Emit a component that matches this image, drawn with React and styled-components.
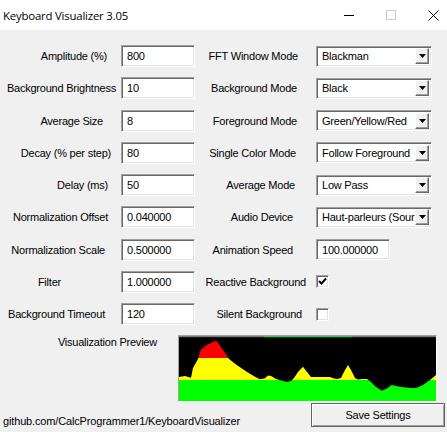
import styled, { createGlobalStyle } from "styled-components";

const GlobalStyle = createGlobalStyle`
  body {
    margin: 0;
    background: #f0f0f0;
  }
`;

const Window = styled.div`
  width: 447px;
  height: 432px;
  display: flex;
  flex-direction: column;
  overflow: hidden;
  background: #f0f0f0;
  font-family: "Liberation Sans", Arial, sans-serif;
  font-size: 11px;
  letter-spacing: -0.22px;
  color: #000;
`;

const TitleBar = styled.div`
  height: 30px;
  flex: none;
  display: flex;
  align-items: center;
  background: #fff;
  padding-left: 3px;
`;

const Title = styled.div`
  flex: 1;
  font-family: "Open Sans", "Noto Sans", sans-serif;
  font-size: 11.4px;
  letter-spacing: -0.2px;
`;

const Controls = styled.div`
  display: flex;
  gap: 14px;
  height: 100%;
`;

const CtrlButton = styled.div`
  width: 28px;
  display: flex;
  align-items: center;
  justify-content: center;
`;

const Body = styled.div`
  flex: 1;
  display: flex;
  flex-direction: column;
  padding: 10px 2px 0 0;
`;

const Form = styled.div`
  display: grid;
  grid-template-columns: 121px 74px 121px 116px;
  grid-auto-rows: 32.25px;
  align-items: center;
`;

const Label = styled.div`
  text-align: right;
  white-space: nowrap;
  padding-right: ${(p) => p.$pr}px;
`;

const Sunken = styled.div`
  box-sizing: border-box;
  background: #fff;
  border: 1px solid;
  border-color: #a0a0a0 #fff #fff #a0a0a0;
  box-shadow: inset 1px 1px 0 #696969, inset -1px -1px 0 #e3e3e3;
`;

const Edit = styled(Sunken)`
  width: 74px;
  height: ${(p) => p.$h || 22}px;
  display: flex;
  align-items: center;
  padding-left: 5px;
  white-space: nowrap;
`;

const Combo = styled(Sunken)`
  width: 116px;
  height: 21px;
  display: flex;
  align-items: center;
  padding: 2px;
`;

const ComboText = styled.div`
  flex: 1;
  padding-left: 3px;
  white-space: nowrap;
`;

const ArrowButton = styled.div`
  box-sizing: border-box;
  width: 14px;
  height: 16px;
  flex: none;
  display: flex;
  align-items: center;
  justify-content: center;
  background: #f0f0f0;
  border: 1px solid;
  border-color: #fff #696969 #696969 #fff;
  box-shadow: inset -1px -1px 0 #a0a0a0;
`;

const Check = styled(Sunken)`
  width: 13px;
  height: 13px;
  justify-self: start;
  display: flex;
  align-items: center;
  justify-content: center;
`;

const PreviewRow = styled.div`
  display: flex;
  margin-top: 5px;
`;

const PreviewLabel = styled.div`
  width: 178px;
  box-sizing: border-box;
  text-align: right;
  padding: 1px 21px 0 0;
`;

const PreviewBox = styled.div`
  width: 259px;
  height: 67px;
  box-sizing: border-box;
  border: 1px solid;
  border-color: #a0a0a0 #fff #fff #a0a0a0;
  overflow: hidden;

  svg {
    display: block;
  }
`;

const Footer = styled.div`
  flex: 1;
  display: flex;
  justify-content: space-between;
  align-items: flex-start;
  padding-left: 3px;
`;

const Link = styled.div`
  align-self: flex-end;
  padding-bottom: 5px;
  letter-spacing: -0.15px;
`;

const Button = styled.div`
  box-sizing: border-box;
  margin-top: 1px;
  width: 134px;
  height: 24px;
  display: flex;
  align-items: center;
  justify-content: center;
  background: #f0f0f0;
  border: 1px solid #646464;
  box-shadow: inset 1px 1px 0 #fff, inset -1px -1px 0 #a0a0a0;
`;

const leftRows = [
  ["Amplitude (%)", 14, "800"],
  ["Background Brightness", 5, "10"],
  ["Average Size", 18, "8"],
  ["Decay (% per step)", 10, "80"],
  ["Delay (ms)", 13, "50"],
  ["Normalization Offset", 13, "0.040000"],
  ["Normalization Scale", 16, "0.500000"],
  ["Filter", 60, "1.000000"],
  ["Background Timeout", 16, "120"],
];

const rightRows = [
  ["FFT Window Mode", 18, "combo", "Blackman"],
  ["Background Mode", 19, "combo", "Black"],
  ["Foreground Mode", 19, "combo", "Green/Yellow/Red"],
  ["Single Color Mode", 20, "combo", "Follow Foreground"],
  ["Average Mode", 21, "combo", "Low Pass"],
  ["Audio Device", 23, "combo", "Haut-parleurs (Sour"],
  ["Animation Speed", 23, "edit", "100.000000"],
  ["Reactive Background", 10, "check", true],
  ["Silent Background", 14, "check", false],
];

// spectrum outline, in window pixels
const curve = [
  [179, 377], [185, 376], [191, 377.7], [193, 368], [198, 359], [200.7, 350],
  [205, 346], [210.7, 343], [215, 341], [217, 341.5], [223, 350], [229, 359],
  [236.7, 365], [246.7, 371.7], [255, 376.7], [260, 379.3], [265, 378.3],
  [268, 375.5], [271, 376], [276, 379], [283, 381], [287, 382], [291, 381],
  [294, 378], [298, 372], [303, 366.7], [307, 372], [311, 377], [320, 377],
  [330, 377], [334, 378.5], [337, 379], [341, 378], [345, 370], [348, 365],
  [351, 370], [355, 378], [358, 379.5], [362, 379], [367, 379], [371, 382],
  [376, 387], [381.7, 390.7], [386, 389], [391.7, 385], [396, 386], [400, 386.7],
  [410, 388], [416, 388], [423, 385], [430, 380], [436, 375], [436, 401], [179, 401],
];

const Minimize = () => (
  <svg width="10" height="10" viewBox="0 0 10 10">
    <path d="M0 5.5H10" stroke="#000" strokeWidth="1" />
  </svg>
);

const Maximize = () => (
  <svg width="10" height="10" viewBox="0 0 10 10">
    <rect x="0.5" y="0.5" width="9" height="9" fill="none" stroke="#cccccc" />
  </svg>
);

const Close = () => (
  <svg width="11" height="11" viewBox="0 0 11 11">
    <path d="M0.5 0.5L10.5 10.5M10.5 0.5L0.5 10.5" stroke="#000" strokeWidth="1" />
  </svg>
);

const DownArrow = () => (
  <svg width="7" height="4" viewBox="0 0 7 4">
    <path d="M0 0H7L3.5 4Z" fill="#000" />
  </svg>
);

const CheckMark = () => (
  <svg width="9" height="9" viewBox="0 0 9 9">
    <path d="M1 4L3.5 6.5L8 1.5" fill="none" stroke="#000" strokeWidth="2" />
  </svg>
);

const Spectrum = () => (
  <svg width="257" height="65" viewBox="179 336 257 65">
    <defs>
      <clipPath id="spec">
        <polygon points={curve.map((p) => p.join(",")).join(" ")} />
      </clipPath>
    </defs>
    <rect x="179" y="336" width="257" height="65" fill="#000" />
    <rect x="179" y="336" width="257" height="1.2" fill="#7a7a7a" />
    <rect x="264" y="336" width="88" height="1.2" fill="#33cc33" />
    <g clipPath="url(#spec)">
      <rect x="179" y="336" width="257" height="22" fill="#ff0000" />
      <rect x="179" y="358" width="257" height="22" fill="#ffff00" />
      <rect x="179" y="380" width="257" height="21" fill="#00ff00" />
    </g>
  </svg>
);

const Control = ({ kind, value }) => {
  if (kind === "combo")
    return (
      <Combo>
        <ComboText>{value}</ComboText>
        <ArrowButton>
          <DownArrow />
        </ArrowButton>
      </Combo>
    );
  if (kind === "edit") return <Edit $h={21}>{value}</Edit>;
  return <Check>{value && <CheckMark />}</Check>;
};

const App = () => {
  return (
    <Window>
      <GlobalStyle />
      <TitleBar>
        <Title>Keyboard Visualizer 3.05</Title>
        <Controls>
          <CtrlButton>
            <Minimize />
          </CtrlButton>
          <CtrlButton>
            <Maximize />
          </CtrlButton>
          <CtrlButton>
            <Close />
          </CtrlButton>
        </Controls>
      </TitleBar>
      <Body>
        <Form>
          {leftRows.map((row, i) => [
            <Label key={"l" + i} $pr={row[1]}>
              {row[0]}
            </Label>,
            <Edit key={"e" + i}>{row[2]}</Edit>,
            <Label key={"r" + i} $pr={rightRows[i][1]}>
              {rightRows[i][0]}
            </Label>,
            <Control key={"c" + i} kind={rightRows[i][2]} value={rightRows[i][3]} />,
          ])}
        </Form>
        <PreviewRow>
          <PreviewLabel>Visualization Preview</PreviewLabel>
          <PreviewBox>
            <Spectrum />
          </PreviewBox>
        </PreviewRow>
        <Footer>
          <Link>github.com/CalcProgrammer1/KeyboardVisualizer</Link>
          <Button>Save Settings</Button>
        </Footer>
      </Body>
    </Window>
  );
};

export default App;
